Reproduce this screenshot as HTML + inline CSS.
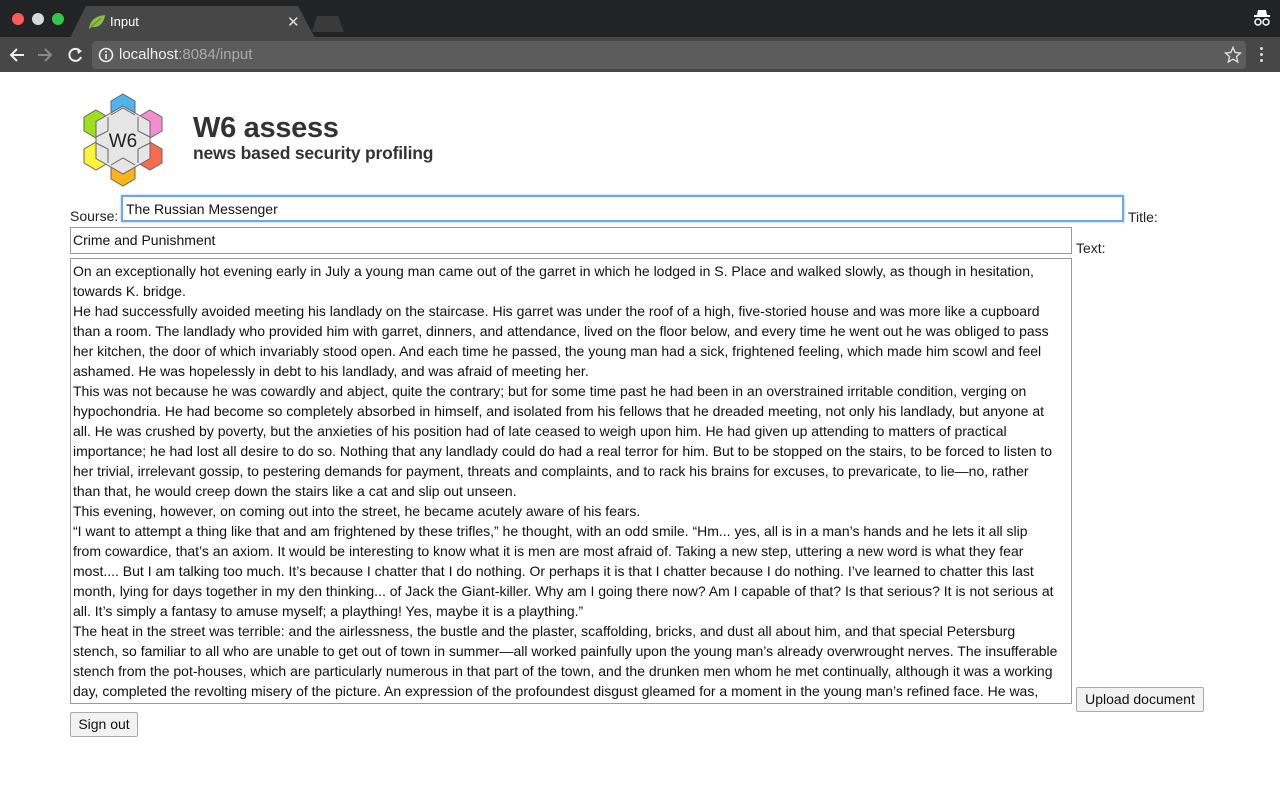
<!DOCTYPE html>
<html><head><meta charset="utf-8"><style>
*{margin:0;padding:0;box-sizing:border-box}
body{width:1280px;height:800px;overflow:hidden;background:#fff;font-family:"Liberation Sans",Arial,sans-serif;color:#222;position:relative}
.abs{position:absolute}
#top{left:0;top:0;width:1280px;height:37px;background:#222325}
#tab{left:70px;top:6px;width:245px;height:32px;background:#474747;clip-path:polygon(16px 0,228px 0,245px 32px,0 32px)}
#tab2{left:312px;top:16px;width:32px;height:16px;background:#3a3a3a;clip-path:polygon(5px 0,26px 0,32px 16px,0 16px)}
#bar{left:0;top:37px;width:1280px;height:35px;background:#474747}
#url{left:92px;top:41px;width:1154px;height:28px;background:#5c5c5c;border-radius:4px}
.dot{width:12px;height:12px;border-radius:50%;top:13px}
.lbl{font-size:14px;color:#222}
.box{border:1px solid #999;background:#fff;font-size:14px;color:#111}
.t{position:absolute;left:4px;font-size:14px;white-space:nowrap;color:#111}
.btn{border:1px solid #aaa;background:#f2f2f2;font-size:14px;color:#111;text-align:center;border-radius:2px}
</style></head><body>
<div class="abs" id="top"></div>
<div class="abs" id="tab"></div>
<div class="abs" id="tab2"></div>
<div class="abs dot" style="left:12px;background:#fc5b57"></div>
<div class="abs dot" style="left:32px;background:#d8d8d8"></div>
<div class="abs dot" style="left:52px;background:#33c748"></div>
<svg class="abs" style="left:88px;top:14px" width="18" height="16" viewBox="0 0 18 16"><path d="M1 15C2 6 8 2 17 1C16 9 11 14 4 13Z" fill="#8cbf3f"/><path d="M3 13L13 4" stroke="#5b8a23" stroke-width="1"/></svg>
<div class="abs" style="left:110px;top:14px;font-size:13px;color:#fff">Input</div>
<div class="abs" style="left:287px;top:13px;font-size:15px;color:#ddd">✕</div>
<svg class="abs" style="left:1252px;top:9px" width="20" height="18" viewBox="0 0 20 18"><path d="M6 1H14L15 6H5Z M2 6H18V8H2Z" fill="#fff"/><circle cx="6" cy="13" r="3" fill="none" stroke="#fff" stroke-width="1.5"/><circle cx="14" cy="13" r="3" fill="none" stroke="#fff" stroke-width="1.5"/></svg>
<div class="abs" id="bar"></div>
<div class="abs" id="url"></div>
<svg class="abs" style="left:8px;top:46px" width="80" height="18" viewBox="0 0 80 18"><path d="M16 9H3M9 3L3 9L9 15" stroke="#eee" stroke-width="2" fill="none"/><path d="M30 9H43M37 3L43 9L37 15" stroke="#888" stroke-width="2" fill="none"/><path d="M72 5A6 6 0 1 0 73 11" stroke="#eee" stroke-width="2" fill="none"/><path d="M69 2L74 5L70 8Z" fill="#eee"/></svg>
<svg class="abs" style="left:98px;top:47px" width="16" height="16" viewBox="0 0 16 16"><circle cx="8" cy="8" r="6.5" stroke="#eee" stroke-width="1.6" fill="none"/><rect x="7.2" y="7" width="1.6" height="5" fill="#eee"/><rect x="7.2" y="4" width="1.6" height="1.6" fill="#eee"/></svg>
<div class="abs" style="left:119px;top:46px;font-size:15px;color:#eee">localhost<span style="color:#aaa">:8084/input</span></div>
<svg class="abs" style="left:1224px;top:46px" width="18" height="18" viewBox="0 0 18 18"><path d="M9 1.5L11.2 6.5L16.5 7L12.5 10.5L13.7 16L9 13.2L4.3 16L5.5 10.5L1.5 7L6.8 6.5Z" stroke="#ddd" stroke-width="1.4" fill="none"/></svg>
<div class="abs" style="left:1260px;top:47px;width:3px;height:3px;background:#ddd;border-radius:50%;box-shadow:0 6px 0 #ddd,0 12px 0 #ddd"></div>

<svg class="abs" style="left:80px;top:92px" width="86" height="96" viewBox="80 92 86 96">
<g stroke="#666" stroke-width="1">
<polygon points="123,94 135,101 135,115 123,122 111,115 111,101" fill="#4db4f0"/>
<polygon points="150,110 162,117 162,131 150,138 138,131 138,117" fill="#f48cd2"/>
<polygon points="150,142 162,149 162,163 150,170 138,163 138,149" fill="#fa6a4e"/>
<polygon points="123,158 135,165 135,179 123,186 111,179 111,165" fill="#ffb31a"/>
<polygon points="96,142 108,149 108,163 96,170 84,163 84,149" fill="#fdf43a"/>
<polygon points="96,110 108,117 108,131 96,138 84,131 84,117" fill="#9ee01b"/>
<polygon points="123,106 150,121.5 150,158.5 123,174 96,158.5 96,121.5" fill="#e6e6e6"/>
<polyline points="111,115 123,108 135,115" fill="none"/>
<polyline points="138,117 138,131 150,137" fill="none"/>
<polyline points="150,143 138,149 138,163" fill="none"/>
<polyline points="111,165 123,158 135,165" fill="none"/>
<polyline points="96,143 108,149 108,163" fill="none"/>
<polyline points="108,117 108,131 96,137" fill="none"/>
</g>
<text x="123" y="147" font-family="Liberation Sans,sans-serif" font-size="19" text-anchor="middle" fill="#222">W6</text>
</svg>
<div class="abs" style="left:193px;top:112px;font-size:29px;color:#333;font-weight:bold;letter-spacing:-0.3px">W6 assess</div>
<div class="abs" style="left:193px;top:143px;font-size:17.5px;color:#333;font-weight:bold;letter-spacing:-0.2px">news based security profiling</div>

<div class="abs lbl" style="left:70px;top:208px">Sourse:</div>
<div class="abs box" style="left:121px;top:195px;width:1003px;height:27px;border:2px solid #6ea6f0;box-shadow:0 0 2px #8ab8f5"><div class="t" style="left:3px;top:4px">The Russian Messenger</div></div>
<div class="abs lbl" style="left:1128px;top:209px">Title:</div>
<div class="abs box" style="left:70px;top:227px;width:1002px;height:27px"><div class="t" style="left:2px;top:4px">Crime and Punishment</div></div>
<div class="abs lbl" style="left:1076px;top:240px">Text:</div>
<div class="abs box" style="left:70px;top:258px;width:1002px;height:446px;overflow:hidden">
<div class="t" style="top:2px;line-height:20px;left:2px">
On an exceptionally hot evening early in July a young man came out of the garret in which he lodged in S. Place and walked slowly, as though in hesitation,<br>
towards K. bridge.<br>
He had successfully avoided meeting his landlady on the staircase. His garret was under the roof of a high, five-storied house and was more like a cupboard<br>
than a room. The landlady who provided him with garret, dinners, and attendance, lived on the floor below, and every time he went out he was obliged to pass<br>
her kitchen, the door of which invariably stood open. And each time he passed, the young man had a sick, frightened feeling, which made him scowl and feel<br>
ashamed. He was hopelessly in debt to his landlady, and was afraid of meeting her.<br>
This was not because he was cowardly and abject, quite the contrary; but for some time past he had been in an overstrained irritable condition, verging on<br>
hypochondria. He had become so completely absorbed in himself, and isolated from his fellows that he dreaded meeting, not only his landlady, but anyone at<br>
all. He was crushed by poverty, but the anxieties of his position had of late ceased to weigh upon him. He had given up attending to matters of practical<br>
importance; he had lost all desire to do so. Nothing that any landlady could do had a real terror for him. But to be stopped on the stairs, to be forced to listen to<br>
her trivial, irrelevant gossip, to pestering demands for payment, threats and complaints, and to rack his brains for excuses, to prevaricate, to lie—no, rather<br>
than that, he would creep down the stairs like a cat and slip out unseen.<br>
This evening, however, on coming out into the street, he became acutely aware of his fears.<br>
“I want to attempt a thing like that and am frightened by these trifles,” he thought, with an odd smile. “Hm... yes, all is in a man’s hands and he lets it all slip<br>
from cowardice, that’s an axiom. It would be interesting to know what it is men are most afraid of. Taking a new step, uttering a new word is what they fear<br>
most.... But I am talking too much. It’s because I chatter that I do nothing. Or perhaps it is that I chatter because I do nothing. I’ve learned to chatter this last<br>
month, lying for days together in my den thinking... of Jack the Giant-killer. Why am I going there now? Am I capable of that? Is that serious? It is not serious at<br>
all. It’s simply a fantasy to amuse myself; a plaything! Yes, maybe it is a plaything.”<br>
The heat in the street was terrible: and the airlessness, the bustle and the plaster, scaffolding, bricks, and dust all about him, and that special Petersburg<br>
stench, so familiar to all who are unable to get out of town in summer—all worked painfully upon the young man’s already overwrought nerves. The insufferable<br>
stench from the pot-houses, which are particularly numerous in that part of the town, and the drunken men whom he met continually, although it was a working<br>
day, completed the revolting misery of the picture. An expression of the profoundest disgust gleamed for a moment in the young man’s refined face. He was,
</div></div>
<div class="abs btn" style="left:1076px;top:687px;width:128px;height:25px;line-height:23px">Upload document</div>
<div class="abs btn" style="left:70px;top:712px;width:68px;height:25px;line-height:23px">Sign out</div>
</body></html>
